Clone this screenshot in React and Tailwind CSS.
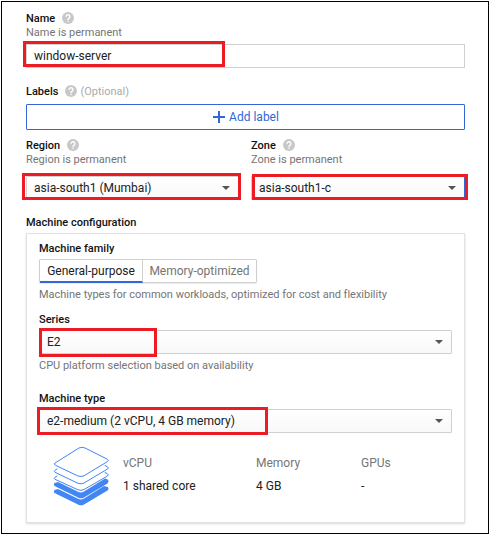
function Help() {
  return (
    <svg className="h-3 w-3 shrink-0" viewBox="0 0 12 12">
      <circle cx="6" cy="6" r="6" fill="#c8c8c8" />
      <path d="M4.100 4.700a1.900 1.900 0 1 1 3.100 1.400C6.500 6.600 6 6.900 6 7.900" fill="none" stroke="#fff" strokeWidth="1.4" />
      <path d="M5.300 8.700h1.400v1.400H5.300z" fill="#fff" />
    </svg>
  );
}

function Title({ children }) {
  return <div className="h-[14px] text-[11px] leading-4 font-medium text-[#111]">{children}</div>;
}

function Hint({ children }) {
  return <div className="h-[14px] text-[11px] leading-4 tracking-[-0.01px] text-[#757575]">{children}</div>;
}

function Select({ children, className = "" }) {
  return (
    <div className={"relative flex h-6 items-center justify-between rounded-[1px] border border-[#d0d0d0] bg-linear-to-b from-white to-[#f8f8f8] pr-2 pl-[7px] " + className}>
      <span className="text-[12px] leading-4 text-[#212121]">{children}</span>
      <svg className="h-1 w-2" viewBox="0 0 8 4"><path d="M0 0h8L4 4z" fill="#555" /></svg>
    </div>
  );
}

function Mark({ className }) {
  return <div className={"pointer-events-none absolute z-10 border-3 border-[#ed1c24] " + className} />;
}

function Layers() {
  return (
    <svg className="h-[60px] w-[56px]" viewBox="0 0 56 60" fill="#fff" stroke="#4285f4" strokeLinejoin="round" strokeLinecap="round">
      <path d="M1.500 44Q0 45.800 2 47.300L25 58.500Q28 60.200 31 58.500L54.500 44.500Q56.300 43 54.800 41L51 40 31 52.500Q28 54.200 25 52.700L5 43Z" fill="#4285f4" stroke="none" />
      <path d="M1.500 37Q0 38.800 2 40.300L25 51.500Q28 53.200 31 51.500L54.500 37.500Q56.300 35.500 54.800 33.500L52 32.500 31 45.500Q28 47.200 25 45.700L5 36Z" fill="#4285f4" stroke="none" />
      <path d="M4 30 2 31.300Q.500 32.500 2 33.300L25 43.800Q28 45 31 43.500L54.500 30Q56 28.800 54.500 27.800L52 26.500" />
      <path d="M4 23 2 24.300Q.500 25.500 2 26.300L25 37.300Q28 38.500 31 37L54.500 23Q56 21.800 54.500 20.800L52 19.500" />
      <path d="M2 19Q.500 18 2 17L26 2Q29 .500 32 2L54.500 13.300Q56 14.300 54.500 15.500L31 29.800Q28 31.200 25 30Z" />
    </svg>
  );
}

export default function App() {
  return (
    <div className="h-[535px] w-[489px] overflow-hidden bg-white pt-px pl-px font-['Roboto',sans-serif]">
      <div className="h-[533px] w-[488px] border border-black pt-[9px] pl-6">
        <div className="w-[439px]">
          <div className="flex h-[14px] items-center gap-[7px]"><Title>Name</Title><Help /></div>
          <Hint>Name is permanent</Hint>
          <div className="relative mt-[5px] flex h-6 items-center border border-[#d0d0d0] pl-[7px] text-[12px] text-[#212121]">
            <span>window-server</span>
            <Mark className="-top-1 -left-1 h-[26px] w-[202px]" />
          </div>

          <div className="mt-[16px] flex h-[14px] items-center"><Title>Labels</Title>
            <span className="ml-[7px] flex"><Help /></span>
            <span className="ml-[3px] h-[14px] text-[11px] leading-4 text-[#aaa]">(Optional)</span>
          </div>
          <div className="mt-[6px] flex h-[26px] items-center justify-center gap-1 rounded-[1px] border border-[#3367d6] pl-px text-[12px] text-[#3367d6]">
            <svg className="h-3 w-3" viewBox="0 0 12 12"><path d="M6 0v12M0 6h12" stroke="#3367d6" strokeWidth="2" /></svg>
            <span>Add label</span>
          </div>

          <div className="mt-2 flex justify-between">
            <div className="w-[213px]">
              <div className="flex h-[14px] items-center gap-[7px]"><Title>Region</Title><Help /></div>
              <Hint>Region is permanent</Hint>
              <div className="relative mt-[10px]"><Select>asia-south1 (Mumbai)</Select><Mark className="-top-[3px] -left-1 h-[27px] w-[219px]" /></div>
            </div>
            <div className="w-[214px]">
              <div className="flex h-[14px] items-center gap-[7px]"><Title>Zone</Title><Help /></div>
              <Hint>Zone is permanent</Hint>
              <div className="relative mt-[10px]"><Select className="border-r-[#3367d6]">asia-south1-c</Select><Mark className="-top-0.5 left-px h-[26px] w-[216px]" /></div>
            </div>
          </div>

          <div className="mt-[15px]"><Title>Machine configuration</Title></div>
          <div className="mt-[4px] h-[290px] border border-[#e2e2e2] px-3 pt-[7px] shadow-[0_1px_2px_rgba(0,0,0,0.15)]">
            <Title>Machine family</Title>
            <div className="mt-[4px] flex h-6 w-[218px] rounded-[1px] border border-[#d0d0d0] text-[12px] shadow-[0_1px_1px_rgba(0,0,0,0.08)]">
              <div className="-mb-px flex w-[103px] items-center justify-center border-r border-b-2 border-r-[#d0d0d0] border-b-[#3367d6] text-[#212121]">General-purpose</div>
              <div className="flex flex-1 items-center justify-center text-[#757575]">Memory-optimized</div>
            </div>
            <div className="mt-[4px]"><Hint>Machine types for common workloads, optimized for cost and flexibility</Hint></div>
            <div className="mt-[11px]"><Title>Series</Title></div>
            <div className="relative mt-[4px]"><Select>E2</Select><Mark className="-top-0.5 left-0 h-[29px] w-[118px]" /></div>
            <div className="mt-[4px]"><Hint>CPU platform selection based on availability</Hint></div>
            <div className="mt-[19px]"><Title>Machine type</Title></div>
            <div className="relative mt-[4px]"><Select>e2-medium (2 vCPU, 4 GB memory)</Select><Mark className="-top-0.5 -left-0.5 h-[28px] w-[231px]" /></div>
            <div className="mt-[13px] flex pl-[14px]">
              <Layers />
              <div className="ml-[14px] grid grid-cols-[133px_105px_60px] grid-rows-[16px_16px] gap-y-[7px] pt-[9px] text-[12px] leading-4 text-[#212121]">
                <span className="text-[#757575]">vCPU</span><span className="text-[#757575]">Memory</span><span className="text-[#757575]">GPUs</span>
                <span>1 shared core</span><span>4 GB</span><span>-</span>
              </div>
            </div>
          </div>
        </div>
      </div>
    </div>
  );
}
